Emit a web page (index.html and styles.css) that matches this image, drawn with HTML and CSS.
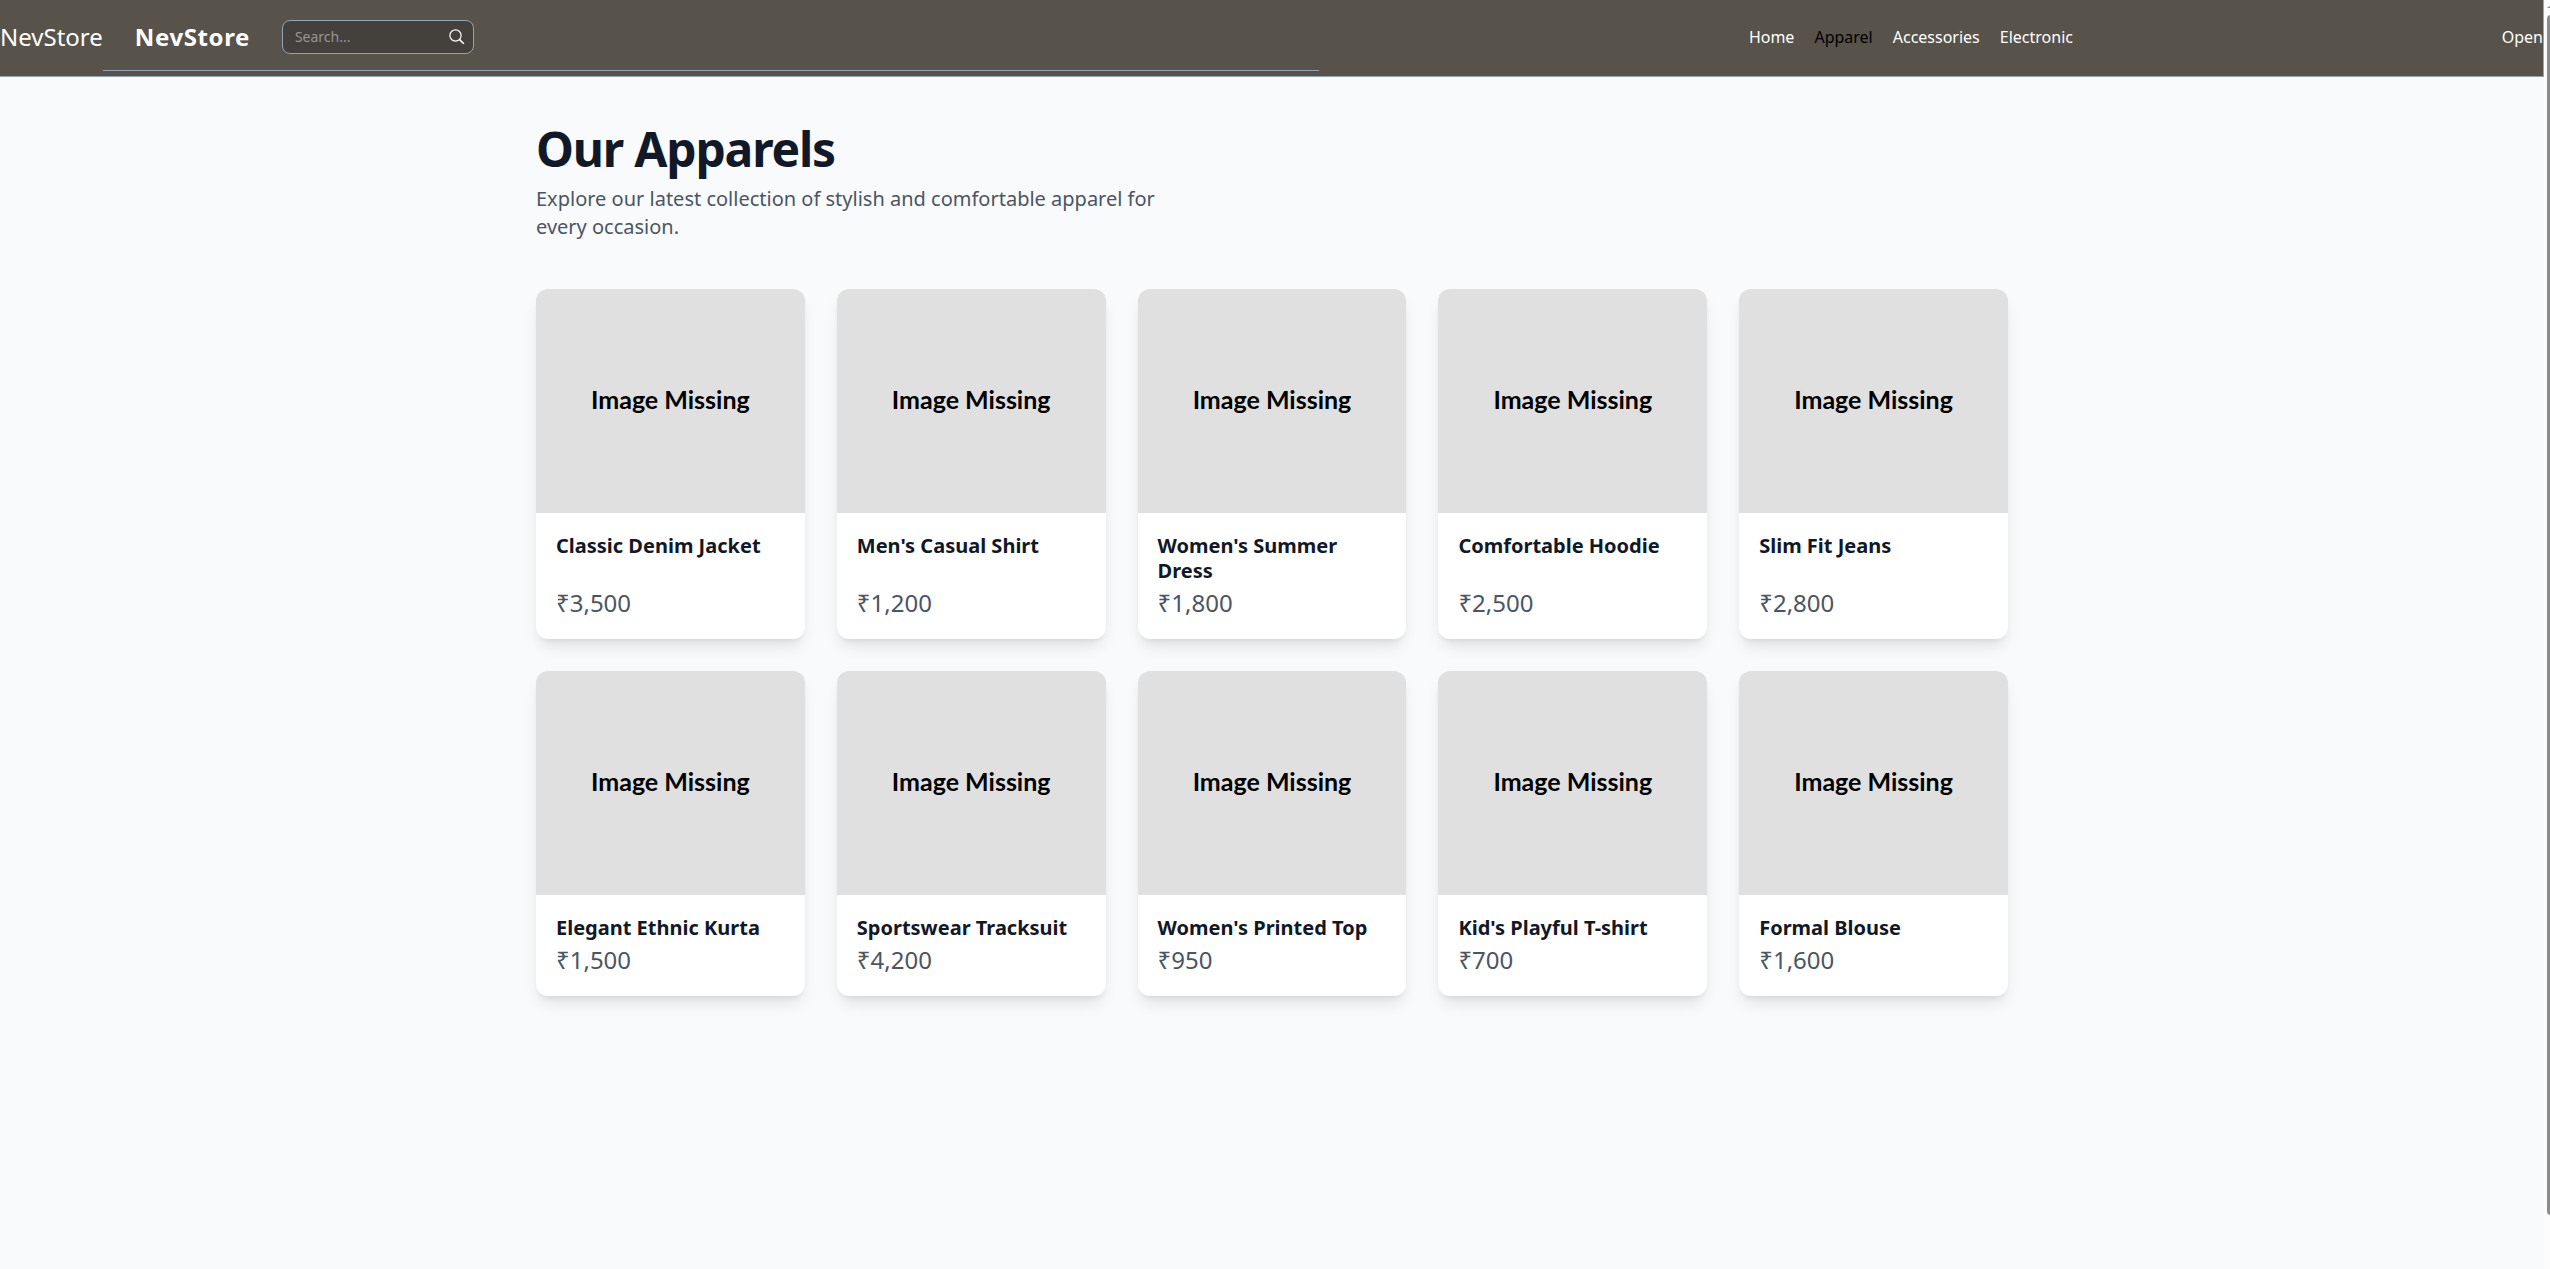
FILE: index.html
```html
<!DOCTYPE html>
<html lang="en">
<head>
<meta charset="utf-8">
<title>NevStore – Apparel</title>
<link rel="stylesheet" href="styles.css">
</head>
<body>
<div class="page">
<header class="topbar">
  <a class="brand" href="#">NevStore</a>
  <div class="tools">
    <a class="brand brand-bold" href="#">NevStore</a>
    <form class="search" role="search">
      <input class="search-input" type="search" placeholder="Search..." aria-label="Search">
      <button class="search-button" type="button" aria-label="Search">
        <svg width="16" height="16" viewBox="0 0 16 16" fill="none" stroke="currentColor" stroke-width="1.2" aria-hidden="true"><circle cx="6.500" cy="6.500" r="5.600"/><path d="M10.600 10.600L14.800 14.800" stroke-width="1.600"/></svg>
      </button>
    </form>
  </div>
  <nav class="links">
    <a href="#">Home</a>
    <a class="active" href="#" aria-current="page">Apparel</a>
    <a href="#">Accessories</a>
    <a href="#">Electronic</a>
  </nav>
  <div class="account"><button class="open" type="button">Open</button></div>
</header>
<main class="content">
  <h1>Our Apparels</h1>
  <p class="intro">Explore our latest collection of stylish and comfortable apparel for every occasion.</p>
  <section class="products">
    <article class="card"><div class="photo">Image Missing</div><div class="info"><h2>Classic Denim Jacket</h2><p class="price">₹3,500</p></div></article>
    <article class="card"><div class="photo">Image Missing</div><div class="info"><h2>Men's Casual Shirt</h2><p class="price">₹1,200</p></div></article>
    <article class="card"><div class="photo">Image Missing</div><div class="info"><h2>Women's Summer Dress</h2><p class="price">₹1,800</p></div></article>
    <article class="card"><div class="photo">Image Missing</div><div class="info"><h2>Comfortable Hoodie</h2><p class="price">₹2,500</p></div></article>
    <article class="card"><div class="photo">Image Missing</div><div class="info"><h2>Slim Fit Jeans</h2><p class="price">₹2,800</p></div></article>
    <article class="card"><div class="photo">Image Missing</div><div class="info"><h2>Elegant Ethnic Kurta</h2><p class="price">₹1,500</p></div></article>
    <article class="card"><div class="photo">Image Missing</div><div class="info"><h2>Sportswear Tracksuit</h2><p class="price">₹4,200</p></div></article>
    <article class="card"><div class="photo">Image Missing</div><div class="info"><h2>Women's Printed Top</h2><p class="price">₹950</p></div></article>
    <article class="card"><div class="photo">Image Missing</div><div class="info"><h2>Kid's Playful T-shirt</h2><p class="price">₹700</p></div></article>
    <article class="card"><div class="photo">Image Missing</div><div class="info"><h2>Formal Blouse</h2><p class="price">₹1,600</p></div></article>
  </section>
</main>
</div>
<div class="scroll-track" aria-hidden="true"><div class="scroll-arrow"></div><div class="scroll-thumb"></div></div>
</body>
</html>
```
FILE: styles.css
```css
* {
  box-sizing: border-box;
}

body {
  margin: 0;
  display: flex;
  min-height: 100vh;
  font-family: "Noto Sans", sans-serif;
  font-size: 16px;
  line-height: 24px;
  color: #111827;
  background: #f9fafc;
}

h1, h2, p {
  margin: 0;
}

a {
  color: inherit;
  text-decoration: none;
}

button, input {
  font: inherit;
  color: inherit;
  border: 0;
  padding: 0;
  background: none;
}

.page {
  flex: 1;
  min-width: 0;
}

/* Top bar */
.topbar {
  display: flex;
  align-items: flex-start;
  padding-bottom: 5px;
  color: #fff;
  background: #57534b;
  border-right: 1px solid #94a3b8;
  border-bottom: 1px solid #94a3b8;
}

.brand {
  font-size: 24px;
  line-height: 32px;
}

.topbar > .brand {
  padding-top: 21px;
}

.brand-bold {
  font-weight: 700;
  letter-spacing: 0.025em;
}

.tools {
  flex: 1184 1 0;
  display: flex;
  align-items: center;
  gap: 32px;
  padding: 20px 0 16px 32px;
  border-bottom: 1px solid #94a3b8;
}

.search {
  display: flex;
  align-items: center;
  width: 192px;
  height: 34px;
  padding: 0 8px 0 12px;
  background: #44403c;
  border: 1px solid #94a3b8;
  border-radius: 8px;
}

.search-input {
  flex: 1;
  min-width: 0;
  font-size: 14px;
  line-height: 20px;
  outline: 0;
}

.search-input::placeholder {
  color: #9b9691;
}

.search-button {
  display: flex;
}

.links {
  flex: 754 1 0;
  display: flex;
  justify-content: flex-end;
  gap: 20px;
  padding-top: 25px;
}

.active {
  color: #000;
}

.account {
  flex: 470 1 0;
  padding-top: 25px;
  text-align: right;
}

/* Catalogue */
.content {
  max-width: 1536px;
  margin: 0 auto;
  padding: 48px 32px;
}

h1 {
  font-size: 48px;
  line-height: 48px;
  letter-spacing: -0.025em;
  margin-bottom: 12px;
}

.intro {
  max-width: 672px;
  margin-bottom: 48px;
  font-size: 20px;
  line-height: 28px;
  color: #4b5563;
}

.products {
  display: grid;
  grid-template-columns: repeat(5, minmax(0, 1fr));
  gap: 32px;
}

.card {
  display: flex;
  flex-direction: column;
  overflow: hidden;
  background: #fff;
  border-radius: 12px;
  box-shadow: 0 10px 15px -3px rgb(0 0 0 / 0.1), 0 4px 6px -4px rgb(0 0 0 / 0.1);
}

.photo {
  display: flex;
  align-items: center;
  justify-content: center;
  height: 224px;
  padding-bottom: 4px;
  font-family: Lato, sans-serif;
  font-size: 25px;
  font-weight: 700;
  color: #000;
  background: #e0e0e0;
}

.info {
  flex: 1;
  display: flex;
  flex-direction: column;
  justify-content: space-between;
  gap: 4px;
  padding: 20px;
}

h2 {
  font-size: 20px;
  line-height: 25px;
}

.price {
  font-size: 24px;
  line-height: 32px;
  color: #4b5563;
}

/* Scroll bar at the window edge */
.scroll-track {
  position: sticky;
  top: 0;
  width: 6px;
  height: 100vh;
  padding: 5px 0 54px 3px;
  display: flex;
  flex-direction: column;
  gap: 7px;
  overflow: hidden;
  background: #fcfcfc;
}

.scroll-arrow {
  width: 8px;
  height: 3px;
  background: #8b8b8b;
  clip-path: polygon(50% 0, 100% 100%, 0 100%);
}

.scroll-thumb {
  flex: 1;
  width: 8px;
  border-radius: 4px;
  background: #8b8b8b;
}
```
